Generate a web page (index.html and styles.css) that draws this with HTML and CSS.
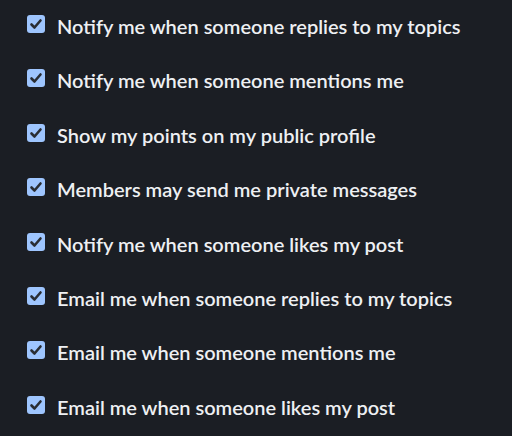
FILE: index.html
```html
<!DOCTYPE html>
<html lang="en">
<head>
  <meta charset="UTF-8">
  <title>Preferences</title>
  <link rel="stylesheet" href="styles.css">
</head>
<body>
  <div class="prefs">
    <label class="pref"><input type="checkbox" checked><span>Notify me when someone replies to my topics</span></label>
    <label class="pref"><input type="checkbox" checked><span>Notify me when someone mentions me</span></label>
    <label class="pref"><input type="checkbox" checked><span>Show my points on my public profile</span></label>
    <label class="pref"><input type="checkbox" checked><span>Members may send me private messages</span></label>
    <label class="pref"><input type="checkbox" checked><span>Notify me when someone likes my post</span></label>
    <label class="pref"><input type="checkbox" checked><span>Email me when someone replies to my topics</span></label>
    <label class="pref"><input type="checkbox" checked><span>Email me when someone mentions me</span></label>
    <label class="pref"><input type="checkbox" checked><span>Email me when someone likes my post</span></label>
  </div>
</body>
</html>
```

FILE: styles.css
```css
* {
  margin: 0;
  padding: 0;
  box-sizing: border-box;
}

body {
  background: #1b1e24;
  color: #eef0f3;
  font-family: Lato, "Open Sans", sans-serif;
  font-size: 20px;
  font-weight: 600;
}

.prefs {
  display: flex;
  flex-direction: column;
  gap: 30.4px;
  padding: 14px 0 0 27px;
}

.pref {
  display: flex;
  align-items: center;
  gap: 12px;
  height: 24px;
}

.pref input {
  appearance: none;
  width: 18px;
  height: 18px;
  margin-bottom: 4px;
  border-radius: 3px;
  background: #9ec5fe url("data:image/svg+xml,%3Csvg xmlns='http://www.w3.org/2000/svg' viewBox='0 0 18 18'%3E%3Cpath d='M4.5 9.5l3 3 6-7' fill='none' stroke='%23292d33' stroke-width='2.6' stroke-linecap='round' stroke-linejoin='round'/%3E%3C/svg%3E") no-repeat center;
  flex: none;
}
```
